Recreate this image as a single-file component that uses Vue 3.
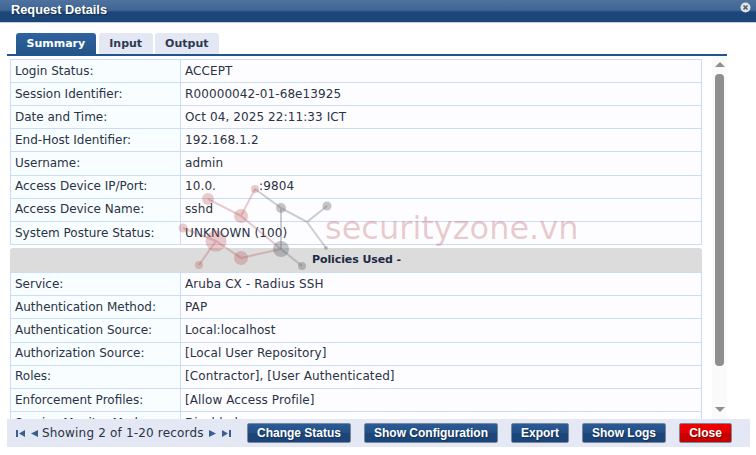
<template>
  <div class="dialog">
    <header class="title-bar">
      <span class="title">Request Details</span>
      <svg class="title-close" width="11" height="11" viewBox="0 0 11 11">
        <circle cx="5.5" cy="5.5" r="5" fill="#dfe3e8" />
        <path d="M3.5 3.5l4 4M7.5 3.5l-4 4" stroke="#4d5c70" stroke-width="1.6" />
      </svg>
    </header>

    <nav class="tabs">
      <div
        v-for="tab in tabs"
        :key="tab"
        class="tab"
        :class="{ active: tab === 'Summary' }"
      >
        {{ tab }}
      </div>
    </nav>

    <div class="content">
      <div class="scroll-view">
        <table class="details">
          <tbody>
            <tr v-for="row in summaryRows" :key="row[0]" :class="row[2]">
              <td class="label">{{ row[0] }}</td>
              <td class="value">
                <template v-if="row[0] === 'Access Device IP/Port:'">
                  10.0.<span class="masked"></span>:9804
                </template>
                <template v-else>{{ row[1] }}</template>
              </td>
            </tr>
          </tbody>
        </table>

        <div class="section-head">Policies Used -</div>

        <table class="details">
          <tbody>
            <tr v-for="row in policyRows" :key="row[0]" :class="row[2]">
              <td class="label">{{ row[0] }}</td>
              <td class="value">{{ row[1] }}</td>
            </tr>
          </tbody>
        </table>
      </div>

      <div class="scrollbar">
        <span class="arrow up"></span>
        <span class="thumb"></span>
        <span class="arrow down"></span>
      </div>
    </div>

    <footer class="footer">
      <div class="pager">
        <svg width="9" height="7" viewBox="0 0 9 7"><path d="M0 0h2v7H0zM9 0v7L3 3.500z" fill="#3a5f8f" /></svg>
        <svg class="prev" width="7" height="7" viewBox="0 0 7 7"><path d="M7 0v7L0 3.500z" fill="#3a5f8f" /></svg>
        <span class="records">Showing 2 of 1-20 records</span>
        <svg class="next" width="7" height="7" viewBox="0 0 7 7"><path d="M0 0v7l7-3.500z" fill="#3a5f8f" /></svg>
        <svg class="last" width="9" height="7" viewBox="0 0 9 7"><path d="M0 0v7l6-3.500zM7 0h2v7H7z" fill="#3a5f8f" /></svg>
      </div>
      <div class="actions">
        <button class="btn change">Change Status</button>
        <button class="btn config">Show Configuration</button>
        <button class="btn export">Export</button>
        <button class="btn logs">Show Logs</button>
        <button class="btn close">Close</button>
      </div>
    </footer>

    <!-- watermark sits over the table -->
    <div class="watermark">
      <svg width="160" height="100" viewBox="175 180 160 100">
        <g stroke-width="2" fill="none">
          <path d="M208 199L241 216L255 189M183 228L216 241L199 265M216 241L241 258L281 249M241 216L281 249" stroke="#b5494c" opacity="0.28" />
          <path d="M255 189L281 208L281 249M281 208L307 222L327 206M307 222L326 248M281 249L302 266" stroke="#666a70" opacity="0.32" />
        </g>
        <g fill="#b5494c" opacity="0.28">
          <circle cx="208" cy="199" r="6" />
          <circle cx="241" cy="216" r="7" />
          <circle cx="255" cy="189" r="4" />
          <circle cx="183" cy="228" r="4.500" />
          <circle cx="216" cy="241" r="10.500" />
          <circle cx="241" cy="258" r="7" />
          <circle cx="199" cy="265" r="4" />
        </g>
        <g fill="#666a70" opacity="0.38">
          <circle cx="281" cy="208" r="5" />
          <circle cx="327" cy="206" r="4.500" />
          <circle cx="281" cy="249" r="8" />
          <circle cx="302" cy="266" r="4" />
          <circle cx="326" cy="248" r="2" />
        </g>
      </svg>
      <span class="brand">securityzone.vn</span>
    </div>
  </div>
</template>

<script setup>
const tabs = ['Summary', 'Input', 'Output']

// third item: row height / text nudge, the original table rounds rows unevenly
const summaryRows = [
  ['Login Status:', 'ACCEPT'],
  ['Session Identifier:', 'R00000042-01-68e13925'],
  ['Date and Time:', 'Oct 04, 2025 22:11:33 ICT'],
  ['End-Host Identifier:', '192.168.1.2'],
  ['Username:', 'admin', 'tall'],
  ['Access Device IP/Port:', '', 'up'],
  ['Access Device Name:', 'sshd', 'up'],
  ['System Posture Status:', 'UNKNOWN (100)'],
]

const policyRows = [
  ['Service:', 'Aruba CX - Radius SSH'],
  ['Authentication Method:', 'PAP'],
  ['Authentication Source:', 'Local:localhost', 'tall'],
  ['Authorization Source:', '[Local User Repository]', 'up'],
  ['Roles:', '[Contractor], [User Authenticated]', 'up'],
  ['Enforcement Profiles:', '[Allow Access Profile]'],
  ['Service Monitor Mode:', 'Disabled'],
]
</script>

<style>
html,
body {
  margin: 0;
  background: #fff;
  overflow: hidden;
}
</style>

<style scoped>
.dialog {
  position: relative;
  width: 756px;
  height: 455px;
  overflow: hidden;
  background: #fff;
  font-family: "DejaVu Sans", Verdana, sans-serif;
  font-size: 12px;
  color: #2a3244;
}

.title-bar {
  display: flex;
  align-items: flex-start;
  justify-content: space-between;
  box-sizing: border-box;
  height: 23px;
  padding: 2px 5px 0 11px;
  background: linear-gradient(#4f729f 0, #3f6695 10px, #34598a 11px, #1c4579 12px, #1c4579 22px, #c4d0e2 22px);
}

.title {
  font-family: "Liberation Sans", Arial, sans-serif;
  font-size: 12.800px;
  font-weight: bold;
  line-height: 16px;
  color: #fff;
  text-shadow: 1px 1px 1px #1a2f4f;
}

.tabs {
  display: flex;
  gap: 2px;
  margin: 10px 29px 0 7px;
  padding-left: 9px;
  border-bottom: 2px solid #22558f;
}

.tab {
  box-sizing: border-box;
  height: 21px;
  padding: 0 10.500px;
  border-radius: 3px 3px 0 0;
  background: #e3e8f4;
  font-size: 11px;
  font-weight: bold;
  line-height: 22px;
  color: #2e3a50;
}

.tab.active {
  margin-right: 1px;
  background: linear-gradient(#2f639f, #235488);
  color: #fff;
}

.content {
  display: flex;
  height: 363px;
  margin: 0 29px 0 7px;
  overflow: hidden;
}

.scroll-view {
  width: 692px;
  margin: 3px 0 0 3px;
  flex: none;
}

.details {
  width: 100%;
  border-collapse: collapse;
  table-layout: fixed;
  background: #fdfdff;
}

.details td {
  box-sizing: border-box;
  height: 23px;
  padding: 0 4px;
  border: 1px solid #cbdcf7;
  white-space: nowrap;
}

.details .tall td {
  height: 24px;
  padding-bottom: 1px;
}

.details .up td {
  padding-bottom: 2px;
}

.label {
  width: 170px;
  background: #f8feff;
}

.value {
  letter-spacing: 0.1px;
}

.masked {
  display: inline-block;
  width: 43px;
}

.section-head {
  box-sizing: border-box;
  height: 24px;
  margin-top: 3px;
  border-radius: 3px 3px 0 0;
  background: #dcdcdc;
  padding-left: 302px;
  font-size: 11px;
  font-weight: bold;
  letter-spacing: -0.1px;
  line-height: 24px;
  color: #1f2a44;
}

.scrollbar {
  display: flex;
  flex-direction: column;
  align-items: center;
  width: 15px;
  margin-left: 10px;
  background: #fafafa;
  flex: none;
}

.thumb {
  width: 9px;
  height: 292px;
  margin-top: 7px;
  border-radius: 4px;
  background: #8f8f8f;
}

.arrow {
  width: 0;
  height: 0;
  border-left: 5px solid transparent;
  border-right: 5px solid transparent;
}

.arrow.up {
  margin-top: 6px;
  border-bottom: 5px solid #8f8f8f;
}

.arrow.down {
  margin-top: 41px;
  border-top: 5px solid #8f8f8f;
}

.footer {
  display: flex;
  align-items: center;
  justify-content: space-between;
  box-sizing: border-box;
  height: 28px;
  margin: 0 6px 0 7px;
  padding: 0 18px 0 9px;
  background: #e3e8f4;
}

.pager {
  display: flex;
  align-items: center;
}

.prev {
  margin-left: 6px;
}

.records {
  margin: 0 5px 0 4px;
  letter-spacing: 0.18px;
}

.last {
  margin-left: 6px;
}

.actions {
  display: flex;
  gap: 13px;
}

.btn {
  box-sizing: border-box;
  height: 20px;
  padding: 0;
  border: 1px solid #7d8896;
  border-radius: 2px;
  background: linear-gradient(#2b5a94, #224f87 50%, #1c4579 51%, #1c4579);
  font-family: "Liberation Sans", Arial, sans-serif;
  font-size: 12px;
  font-weight: bold;
  color: #fff;
  text-shadow: 1px 1px 1px #16335a;
}

.change { width: 104px; }
.config { width: 134px; }
.export { width: 58px; }
.logs { width: 84px; }

.close {
  width: 53px;
  background: linear-gradient(#f00000, #e20000 50%, #c90000 51%, #c90000);
  text-shadow: 1px 1px 1px #700;
}

.watermark {
  position: absolute;
  left: 175px;
  top: 180px;
  width: 420px;
  height: 100px;
  pointer-events: none;
}

.brand {
  position: absolute;
  left: 150px;
  top: 31px;
  font-size: 32px;
  line-height: 34px;
  color: rgba(181, 73, 76, 0.28);
  white-space: nowrap;
}
</style>
